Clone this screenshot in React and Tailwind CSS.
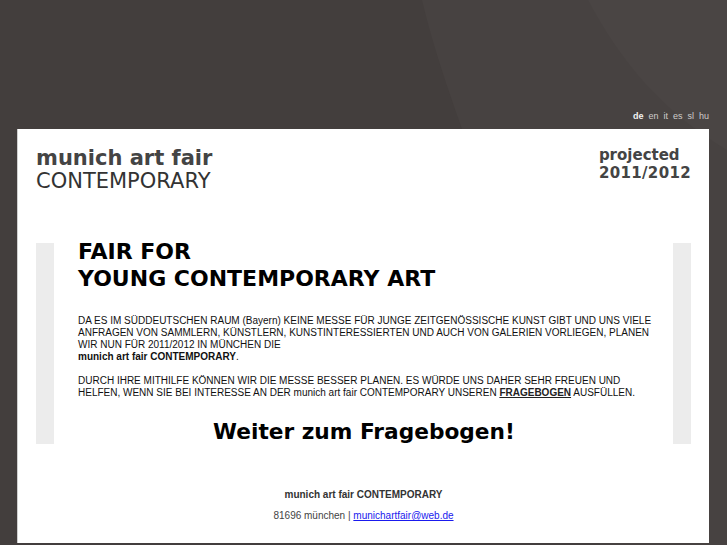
export default function App() {
    const langs = ['en', 'it', 'es', 'sl', 'hu']

    return (
        <div className="relative min-h-[545px] w-full overflow-hidden bg-[#433e3d] font-['Liberation_Sans',Arial,sans-serif]">
            {/* background swooshes */}
            <svg className="absolute inset-0 h-full w-full" viewBox="0 0 727 545" preserveAspectRatio="none">
                <path d="M422 0 C450 120 520 260 600 545 L727 545 L727 0 Z" fill="#474241" />
                <path d="M588 0 C620 60 660 110 727 150 L727 0 Z" fill="#4a4544" />
            </svg>

            <div className="relative flex flex-col">
                {/* language bar */}
                <div className="flex h-[129px] items-end justify-end gap-[5px] pb-[8px] pr-[18px] text-[9px] leading-none">
                    <span className="font-bold text-[#f2f2f2]">de</span>
                    {langs.map((l) => (
                        <span key={l} className="text-[#cfcccb]">{l}</span>
                    ))}
                </div>

                {/* white panel */}
                <div className="ml-[17px] flex h-[414px] w-[692px] flex-col border-l border-[#cfcfcf] bg-white">
                    <header className="flex justify-between pl-[18px] pr-[18px] pt-[18px] font-['DejaVu_Sans',Verdana,sans-serif] text-[#444]">
                        <div className="text-[21px] leading-[23px]">
                            <p className="font-bold">munich art fair</p>
                            <p className="text-[#333]">CONTEMPORARY</p>
                        </div>
                        <div className="-mt-[1px] text-[15px] font-bold leading-[18px]">
                            <p>projected</p>
                            <p className="tracking-[0.35px]">2011/2012</p>
                        </div>
                    </header>

                    <section className="mx-[18px] mt-[50px] flex h-[201px] justify-between">
                        <div className="w-[18px] bg-[#ececec]" />
                        <div className="flex flex-1 flex-col pl-[24px] pr-[10px]">
                            <h1 className="-mt-[5px] font-['DejaVu_Sans',Verdana,sans-serif] text-[22px] font-bold leading-[27px] text-black">
                                FAIR FOR<br />YOUNG CONTEMPORARY ART
                            </h1>
                            <div className="mt-[23px] text-[10px] leading-[12px] text-[#111]">
                                <p>
                                    DA ES IM SÜDDEUTSCHEN RAUM (Bayern) KEINE MESSE FÜR JUNGE ZEITGENÖSSISCHE KUNST GIBT UND UNS VIELE<br />
                                    ANFRAGEN VON SAMMLERN, KÜNSTLERN, KUNSTINTERESSIERTEN UND AUCH VON GALERIEN VORLIEGEN, PLANEN<br />
                                    WIR NUN FÜR 2011/2012 IN MÜNCHEN DIE<br />
                                    <b>munich art fair CONTEMPORARY</b>.
                                </p>
                                <p className="mt-[12px]">
                                    DURCH IHRE MITHILFE KÖNNEN WIR DIE MESSE BESSER PLANEN. ES WÜRDE UNS DAHER SEHR FREUEN UND<br />
                                    HELFEN, WENN SIE BEI INTERESSE AN DER munich art fair CONTEMPORARY UNSEREN <a href="#" className="font-bold text-[#222] underline">FRAGEBOGEN</a> AUSFÜLLEN.
                                </p>
                            </div>
                            <a href="#" className="mt-[19px] self-center pr-[13px] font-['DejaVu_Sans',Verdana,sans-serif] text-[21.7px] font-bold leading-[28px] text-black">
                                Weiter zum Fragebogen!
                            </a>
                        </div>
                        <div className="w-[18px] bg-[#ececec]" />
                    </section>

                    <footer className="mt-[45px] flex flex-col items-center text-[10px] leading-[12px] text-[#333]">
                        <p className="font-bold">munich art fair CONTEMPORARY</p>
                        <p className="mt-[9px] text-[#444]">
                            81696 münchen | <a href="#" className="text-[#1a1aee] underline">munichartfair@web.de</a>
                        </p>
                    </footer>
                </div>
            </div>
        </div>
    )
}
